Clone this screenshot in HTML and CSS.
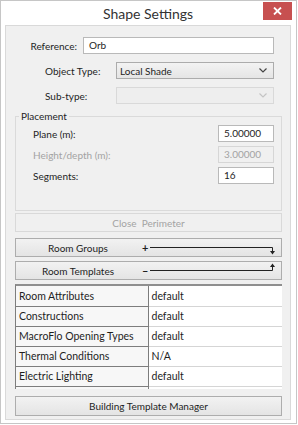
FILE: index.html
```html
<!DOCTYPE html>
<html lang="en">
<head>
    <meta charset="UTF-8" />
    <title>Shape Settings</title>
    <link rel="stylesheet" href="styles.css">
</head>
<body>
    <div class="window">
        <div class="titlebar">
            <div class="title">Shape Settings</div>
            <div class="close">
                <svg width="9" height="8" viewBox="0 0 9 8">
                    <path d="M1 0.5 L8 7.5 M8 0.5 L1 7.5" stroke="#fff" stroke-width="1.8" />
                </svg>
            </div>
        </div>

        <div class="panel">
            <div class="fields">
                <div class="field field-ref">
                    <label>Reference:</label>
                    <div class="textbox">Orb</div>
                </div>
                <div class="field field-type">
                    <label>Object Type:</label>
                    <div class="select">
                        <span>Local Shade</span>
                        <svg width="8" height="5" viewBox="0 0 8 5"><path d="M0.5 0.5 L4 4 L7.5 0.5" fill="none" stroke="#444" stroke-width="1.2" /></svg>
                    </div>
                </div>
                <div class="field field-type">
                    <label>Sub-type:</label>
                    <div class="select disabled">
                        <span></span>
                        <svg width="8" height="5" viewBox="0 0 8 5"><path d="M0.5 0.5 L4 4 L7.5 0.5" fill="none" stroke="#c4c4c4" stroke-width="1.2" /></svg>
                    </div>
                </div>
            </div>

            <fieldset class="placement">
                <legend>Placement</legend>
                <div class="prow">
                    <label>Plane (m):</label>
                    <div class="textbox num">5.00000</div>
                </div>
                <div class="prow disabled">
                    <label>Height/depth (m):</label>
                    <div class="textbox num">3.00000</div>
                </div>
                <div class="prow">
                    <label>Segments:</label>
                    <div class="textbox num">16</div>
                </div>
            </fieldset>

            <button class="btn btn-disabled">Close&nbsp; Perimeter</button>

            <button class="btn btn-split btn-groups">
                <span class="btn-label">Room Groups</span>
                <span class="btn-sign">+</span>
                <svg width="126" height="17" viewBox="0 0 126 17">
                    <path d="M0 8.5 H122.5 V13" fill="none" stroke="#222" stroke-width="1" />
                    <path d="M120 12 H125 L122.5 15.5 Z" fill="#222" />
                </svg>
            </button>

            <button class="btn btn-split btn-templates">
                <span class="btn-label">Room Templates</span>
                <span class="btn-sign">&ndash;</span>
                <svg width="126" height="17" viewBox="0 0 126 17">
                    <path d="M0 8.5 H122.5 V4" fill="none" stroke="#222" stroke-width="1" />
                    <path d="M120 5 H125 L122.5 1.5 Z" fill="#222" />
                </svg>
            </button>

            <div class="grid">
                <table>
                    <tr><td class="key">Room Attributes</td><td>default</td></tr>
                    <tr><td class="key">Constructions</td><td>default</td></tr>
                    <tr><td class="key">MacroFlo Opening Types</td><td>default</td></tr>
                    <tr><td class="key">Thermal Conditions</td><td>N/A</td></tr>
                    <tr><td class="key">Electric Lighting</td><td>default</td></tr>
                    <tr><td class="key"></td><td></td></tr>
                </table>
            </div>

            <button class="btn btn-manager">Building Template Manager</button>
        </div>
    </div>
</body>
</html>
```

FILE: styles.css
```css
/* Reset */
* {
    margin: 0;
    padding: 0;
    box-sizing: border-box;
}

body {
    font-family: Lato, 'Open Sans', sans-serif;
    font-size: 10px;
    color: #1e1e1e;
    background: #fff;
}

/* Window frame */
.window {
    width: 297px;
    height: 424px;
    border: 1px solid #c6c6c6;
    background: #fff;
    padding: 0 5px 3px 4px;
    display: flex;
    flex-direction: column;
}

.titlebar {
    height: 24px;
    display: grid;
}

.titlebar > * {
    grid-area: 1 / 1;
}

.title {
    text-align: center;
    font-size: 14px;
    line-height: 25px;
    color: #333;
}

.close {
    justify-self: end;
    align-self: start;
    width: 29px;
    height: 18px;
    margin-top: 1px;
    margin-right: -1px;
    background: #c75050;
    display: flex;
    align-items: center;
    justify-content: center;
}

/* Main panel */
.panel {
    flex: 1;
    background: #f0f0f0;
    border: 1px solid #d9d9d9;
    padding: 11px 8px 2px 9px;
}

.fields {
    padding-right: 8px;
}

.field {
    display: flex;
    align-items: center;
    height: 17px;
}

.field + .field {
    margin-top: 8px;
}

.field-ref label {
    width: 62px;
    margin-right: 6px;
    text-align: right;
}

.field-type label {
    width: 101px;
    padding-left: 30px;
}

.textbox {
    height: 17px;
    line-height: 15px;
    border: 1px solid #b9b9b9;
    background: #fff;
    padding: 0 5px;
}

.field .textbox {
    flex: 1;
}

.select {
    flex: 1;
    height: 17px;
    display: flex;
    align-items: center;
    justify-content: space-between;
    border: 1px solid #acacac;
    background: linear-gradient(#f3f3f3, #e5e5e5);
    padding: 0 6px 0 3px;
}

.select.disabled {
    border-color: #d9d9d9;
    background: #eeeeee;
}

/* Placement group */
.placement {
    margin-top: 5px;
    border: 1px solid #dadada;
    padding: 2px 7px 26px 17px;
}

.placement legend {
    margin-left: -14px;
    padding: 0 2px;
    line-height: 14px;
}

.prow {
    display: flex;
    align-items: center;
    justify-content: space-between;
    height: 17px;
}

.prow + .prow {
    margin-top: 4px;
}

.textbox.num {
    width: 56px;
}

.prow.disabled label,
.prow.disabled .textbox {
    color: #a3a3a3;
}

.prow.disabled .textbox {
    background: #f0f0f0;
    border-color: #d6d6d6;
}

/* Buttons */
.btn {
    display: block;
    width: 100%;
    height: 19px;
    border: 1px solid #adadad;
    background: linear-gradient(#f2f2f2, #e4e4e4);
    font-family: inherit;
    font-size: 10px;
    color: #1e1e1e;
    text-align: center;
}

.btn-disabled {
    margin-top: 2px;
    border-color: #d9d9d9;
    background: #f0f0f0;
    color: #a3a3a3;
}

.btn-split {
    display: grid;
    grid-template-columns: 124px 10px 1fr;
    align-items: center;
}

.btn-groups {
    margin-top: 6px;
}

.btn-templates {
    margin-top: 4px;
}

.btn-sign {
    text-align: left;
    padding-left: 2px;
    font-size: 11px;
    font-weight: 700;
}

.btn-split svg {
    display: block;
}

.btn-manager {
    margin-top: 7px;
    height: 20px;
}

/* Template grid */
.grid {
    margin-top: 4px;
    height: 105px;
    overflow: hidden;
    border-top: 2px solid #8f8f8f;
    border-left: 1px solid #7d7d7d;
}

.grid table {
    width: 100%;
    border-collapse: collapse;
    font-size: 10.5px;
}

.grid td {
    height: 20px;
    padding: 0 3px;
    background: #fff;
    border-bottom: 1px solid #d5d5d5;
    white-space: nowrap;
}

.grid td.key {
    width: 132px;
    background: #f7f7f7;
    border-right: 1px solid #7d7d7d;
    border-bottom-color: #7d7d7d;
}
```
